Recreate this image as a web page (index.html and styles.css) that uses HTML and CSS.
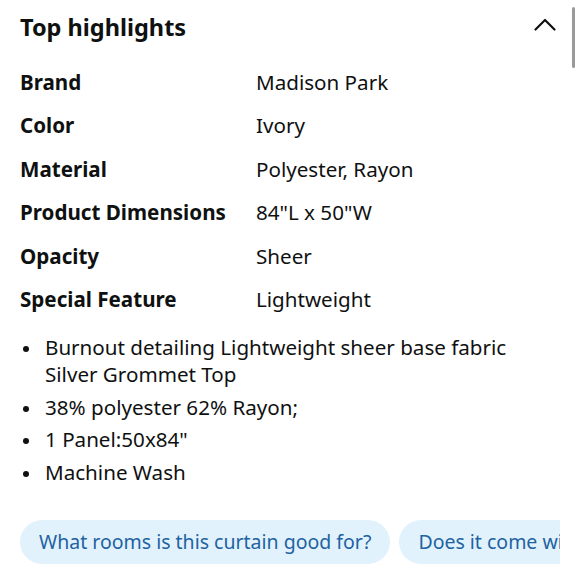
FILE: index.html
```html
<!DOCTYPE html>
<html>
<head>
<meta charset="utf-8">
<link rel="stylesheet" href="styles.css">
</head>
<body>
<div class="page">
  <div class="header">
    <h2 class="title">Top highlights</h2>
    <svg class="chevron" width="22" height="13" viewBox="0 0 22 13"><path d="M1.5 11.5 L11 2 L20.5 11.5" fill="none" stroke="#0f1111" stroke-width="2.2" stroke-linecap="round" stroke-linejoin="round"/></svg>
  </div>
  <div class="specs">
    <div class="label">Brand</div><div class="value">Madison Park</div>
    <div class="label">Color</div><div class="value">Ivory</div>
    <div class="label">Material</div><div class="value">Polyester, Rayon</div>
    <div class="label">Product Dimensions</div><div class="value">84"L x 50"W</div>
    <div class="label">Opacity</div><div class="value">Sheer</div>
    <div class="label">Special Feature</div><div class="value">Lightweight</div>
  </div>
  <ul class="bullets">
    <li>Burnout detailing Lightweight sheer base fabric Silver Grommet Top</li>
    <li>38% polyester 62% Rayon;</li>
    <li>1 Panel:50x84"</li>
    <li>Machine Wash</li>
  </ul>
  <div class="chips">
    <div class="chip">What rooms is this curtain good for?</div>
    <div class="chip">Does it come with hardware?</div>
  </div>
</div>
<div class="scrollbar"></div>
</body>
</html>
```
FILE: styles.css
```css
html, body {
  margin: 0;
  padding: 0;
  background: #ffffff;
  overflow: hidden;
}
body {
  font-family: "Noto Sans", "Open Sans", sans-serif;
  color: #0f1111;
  width: 580px;
  height: 580px;
}
.page {
  padding: 11px 0 0 20px;
}
.header {
  display: flex;
  align-items: center;
  justify-content: space-between;
  padding-right: 24px;
  height: 32px;
}
.title {
  margin: 0;
  font-size: 23.5px;
  font-weight: 700;
  line-height: 32px;
}
.chevron {
  display: block;
  margin-top: -5px;
}
.specs {
  display: grid;
  grid-template-columns: 236px auto;
  grid-auto-rows: 43.4px;
  margin-top: 25px;
  font-size: 20.6px;
  line-height: 28px;
}
.label {
  font-weight: 700;
}
.bullets {
  list-style: none;
  margin: 6px 0 0 0;
  padding: 0 0 0 25px;
  font-size: 20.6px;
  line-height: 27px;
  width: 500px;
}
.bullets li {
  position: relative;
  margin-bottom: 5.5px;
}
.bullets li::before {
  content: "";
  position: absolute;
  left: -22px;
  top: 12px;
  width: 6px;
  height: 6px;
  border-radius: 50%;
  background: #0f1111;
}
.chips {
  display: flex;
  gap: 9px;
  margin-top: 34px;
  white-space: nowrap;
  width: 540px;
  overflow: hidden;
}
.chip {
  flex: none;
  background: #e1f2fd;
  color: #2162a1;
  font-size: 19.5px;
  height: 44px;
  line-height: 44px;
  padding: 0 19px;
  border-radius: 22px;
}
.scrollbar {
  position: absolute;
  top: 7px;
  right: 5px;
  width: 3px;
  height: 61px;
  background: #9a9a9a;
  border-radius: 2px;
}
```
